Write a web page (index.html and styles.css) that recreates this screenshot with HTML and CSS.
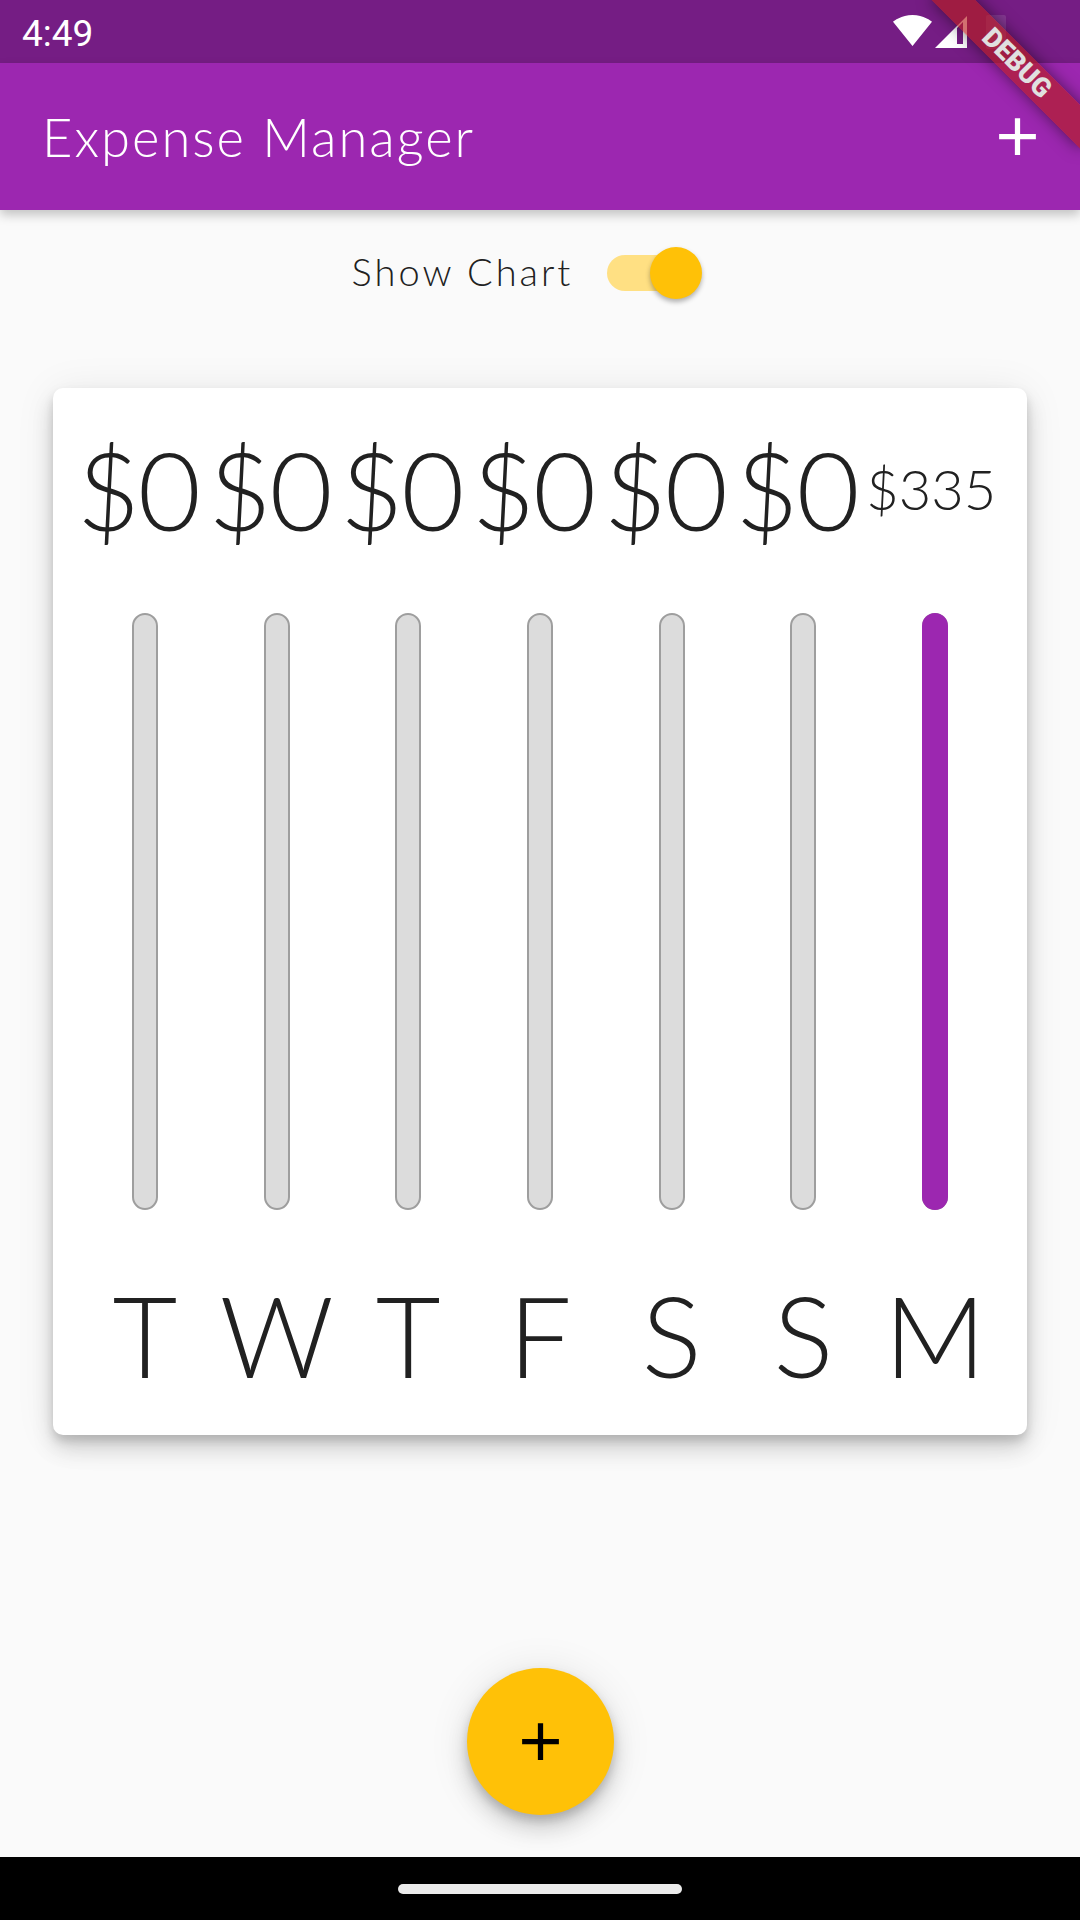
FILE: index.html
```
<!DOCTYPE html>
<html lang="en">
<head>
    <meta charset="UTF-8">
    <meta name="viewport" content="width=device-width, initial-scale=1.0">
    <title>Expense Manager</title>
    <link rel="stylesheet" href="styles.css">
</head>
<body>
    <div class="phone">
        <div class="status-bar">
            <span class="time">4:49</span>
            <div class="status-icons">
                <svg class="wifi" viewBox="0.36 3 23.28 18.5" width="39" height="31">
                    <path d="M12.01 21.49L23.64 7c-.45-.34-4.93-4-11.64-4C5.28 3 .81 6.66.36 7l11.63 14.49.01.01.01-.01z" fill="#fff"/>
                </svg>
                <svg class="signal" viewBox="0 0 32 32" width="32" height="32">
                    <path d="M0 32H32V0Z M22 28V12L28 6V28Z" fill="#fff" fill-rule="evenodd"/>
                </svg>
                <div class="battery"></div>
            </div>
        </div>

        <header class="app-bar">
            <h1>Expense Manager</h1>
            <button class="icon-btn" aria-label="Add">
                <svg viewBox="0 0 24 24" width="63" height="63"><path d="M19 13h-6v6h-2v-6H5v-2h6V5h2v6h6v2z" fill="#fff"/></svg>
            </button>
        </header>

        <main class="content">
            <div class="toggle-row">
                <span class="toggle-label">Show Chart</span>
                <div class="switch">
                    <div class="switch-track"></div>
                    <div class="switch-thumb"></div>
                </div>
            </div>

            <section class="chart-card">
                <div class="chart-col">
                    <div class="amount amount-big">$0</div>
                    <div class="bar"><div class="bar-track"></div></div>
                    <div class="day">T</div>
                </div>
                <div class="chart-col">
                    <div class="amount amount-big">$0</div>
                    <div class="bar"><div class="bar-track"></div></div>
                    <div class="day">W</div>
                </div>
                <div class="chart-col">
                    <div class="amount amount-big">$0</div>
                    <div class="bar"><div class="bar-track"></div></div>
                    <div class="day">T</div>
                </div>
                <div class="chart-col">
                    <div class="amount amount-big">$0</div>
                    <div class="bar"><div class="bar-track"></div></div>
                    <div class="day">F</div>
                </div>
                <div class="chart-col">
                    <div class="amount amount-big">$0</div>
                    <div class="bar"><div class="bar-track"></div></div>
                    <div class="day">S</div>
                </div>
                <div class="chart-col">
                    <div class="amount amount-big">$0</div>
                    <div class="bar"><div class="bar-track"></div></div>
                    <div class="day">S</div>
                </div>
                <div class="chart-col">
                    <div class="amount amount-small">$335</div>
                    <div class="bar"><div class="bar-track"></div><div class="bar-fill" style="height: 100%"></div></div>
                    <div class="day">M</div>
                </div>
            </section>

            <div class="fab-area">
                <button class="fab" aria-label="Add expense">
                    <svg viewBox="0 0 24 24" width="63" height="63"><path d="M19 13h-6v6h-2v-6H5v-2h6V5h2v6h6v2z" fill="#000"/></svg>
                </button>
            </div>
        </main>

        <div class="nav-bar"><div class="nav-handle"></div></div>

        <div class="debug-anchor"><div class="debug-band">DEBUG</div></div>
    </div>
</body>
</html>
```

FILE: styles.css
```
html, body {
    margin: 0;
    padding: 0;
}

body {
    font-family: Lato, "Open Sans", sans-serif;
    background: #fafafa;
    color: #212121;
    overflow: hidden;
}

.phone {
    position: relative;
    width: 1080px;
    height: 1920px;
    display: flex;
    flex-direction: column;
    overflow: hidden;
}

/* status bar */
.status-bar {
    height: 63px;
    flex-shrink: 0;
    background: #751d84;
    display: flex;
    align-items: center;
    justify-content: space-between;
    padding: 0 74px 0 22px;
}

.time {
    font-family: Roboto, sans-serif;
    font-size: 37px;
    color: #fff;
    margin-top: 3px;
}

.status-icons {
    display: flex;
    align-items: center;
}

.status-icons .wifi {
    margin-right: 3px;
    margin-top: -3px;
}

.status-icons .signal {
    margin-right: 19px;
}

.battery {
    width: 20px;
    height: 34px;
    border-radius: 2px;
    background: rgba(255, 255, 255, 0.12);
}

/* app bar */
.app-bar {
    height: 147px;
    flex-shrink: 0;
    background: #9c27b0;
    display: flex;
    align-items: center;
    justify-content: space-between;
    padding-left: 42px;
    box-shadow: 0 5px 10px rgba(0, 0, 0, 0.22);
    position: relative;
    z-index: 2;
}

.app-bar h1 {
    margin: 0;
    font-size: 52.5px;
    font-weight: 300;
    letter-spacing: 2px;
    color: #fff;
}

.icon-btn {
    width: 126px;
    height: 126px;
    border: none;
    background: none;
    padding: 0;
    display: flex;
    align-items: center;
    justify-content: center;
}

/* content */
.content {
    flex: 1;
    display: flex;
    flex-direction: column;
}

.toggle-row {
    height: 126px;
    display: flex;
    align-items: center;
    justify-content: center;
}

.toggle-label {
    font-size: 38px;
    font-weight: 300;
    letter-spacing: 3px;
    margin-top: -4px;
}

.switch {
    position: relative;
    width: 155px;
    height: 126px;
}

.switch-track {
    position: absolute;
    left: 34px;
    top: 45px;
    width: 87px;
    height: 36px;
    border-radius: 18px;
    background: #ffe083;
}

.switch-thumb {
    position: absolute;
    left: 77px;
    top: 37px;
    width: 52px;
    height: 52px;
    border-radius: 50%;
    background: #ffc107;
    box-shadow: 0 3px 5px rgba(0, 0, 0, 0.3);
}

/* chart */
.chart-card {
    margin: 52px 53px 0;
    height: 1047px;
    box-sizing: border-box;
    padding: 26px;
    background: #fff;
    border-radius: 10px;
    box-shadow: 0 14px 22px rgba(0, 0, 0, 0.14), 0 3px 40px rgba(0, 0, 0, 0.08), 0 6px 10px rgba(0, 0, 0, 0.14);
    display: flex;
}

.chart-col {
    flex: 1;
    min-width: 0;
    display: flex;
    flex-direction: column;
    align-items: center;
}

.amount {
    height: 149px;
    display: flex;
    align-items: center;
    justify-content: center;
    font-weight: 300;
    line-height: 1;
    white-space: nowrap;
}

.amount-big {
    font-size: 109px;
    letter-spacing: -2px;
    padding-right: 14px;
}

.amount-small {
    font-size: 56px;
    padding-right: 8px;
}

.bar {
    position: relative;
    margin: 50px 0;
    width: 26px;
    height: 597px;
}

.bar-track {
    position: absolute;
    inset: 0;
    border: 2.6px solid #9e9e9e;
    border-radius: 13px;
    background: #dcdcdc;
}

.bar-fill {
    position: absolute;
    left: 0;
    right: 0;
    bottom: 0;
    border-radius: 13px;
    background: #9c27b0;
}

.day {
    height: 149px;
    display: flex;
    align-items: center;
    justify-content: center;
    font-size: 112px;
    font-weight: 300;
    line-height: 1;
}

/* floating button */
.fab-area {
    margin-top: auto;
    padding-bottom: 42px;
    display: flex;
    justify-content: center;
}

.fab {
    width: 147px;
    height: 147px;
    border-radius: 50%;
    border: none;
    padding: 0;
    background: #ffc107;
    display: flex;
    align-items: center;
    justify-content: center;
    box-shadow: 0 14px 22px rgba(0, 0, 0, 0.14), 0 3px 40px rgba(0, 0, 0, 0.1), 0 6px 10px rgba(0, 0, 0, 0.16);
}

/* system nav */
.nav-bar {
    height: 63px;
    flex-shrink: 0;
    background: #000;
    display: flex;
    align-items: center;
    justify-content: center;
}

.nav-handle {
    width: 284px;
    height: 10px;
    border-radius: 5px;
    background: #ebebeb;
}

/* debug banner */
.debug-anchor {
    position: absolute;
    top: 0;
    right: 0;
    width: 0;
    height: 0;
    transform: rotate(45deg);
    transform-origin: 0 0;
    z-index: 10;
}

.debug-band {
    position: absolute;
    left: -105px;
    top: 73.5px;
    width: 210px;
    height: 31.5px;
    background: rgba(183, 28, 28, 0.63);
    box-shadow: 0 0 16px rgba(0, 0, 0, 0.5);
    color: #e0e0e0;
    font-family: Roboto, sans-serif;
    font-weight: 900;
    font-size: 26.8px;
    line-height: 31.5px;
    text-align: center;
}
```
